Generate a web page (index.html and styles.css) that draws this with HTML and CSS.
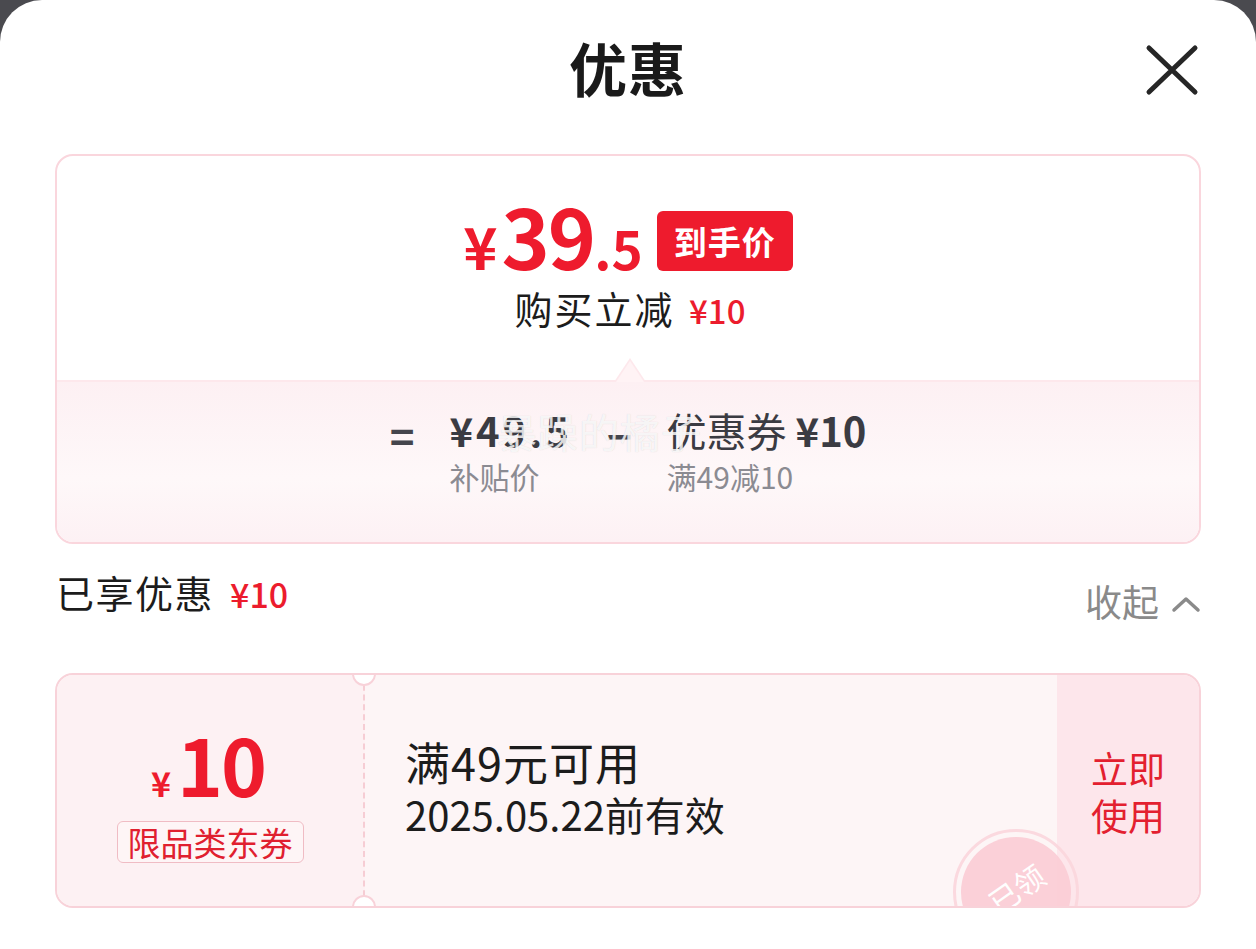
FILE: index.html
```html
<!DOCTYPE html>
<html lang="zh-CN">
 <head>
  <meta charset="UTF-8">
  <meta name="viewport" content="width=device-width, initial-scale=1.0">
  <title>优惠</title>
  <link rel="stylesheet" href="styles.css">
 </head>
<body>

<div class="sheet">

 <!-- Kopf -->
 <div class="kopf">
  <span></span>
  <h1 class="titel">优惠</h1>
  <span class="schliessen" title="关闭">
   <svg width="54" height="52" viewBox="0 0 54 52">
    <path d="M4 4 L50 48 M50 4 L4 48" stroke="#262626" stroke-width="5" stroke-linecap="round" fill="none"/>
   </svg>
  </span>
 </div>

 <!-- Preiskarte -->
 <div class="preiskarte">
  <div class="preis-oben">
   <div class="preiszeile">
    <span class="preis"><span class="yen">¥</span><span class="ganz">39</span><span class="rest">.5</span></span>
    <span class="marke">到手价</span>
   </div>
   <div class="ersparnis">购买立减 <span class="rot">¥10</span></div>
   <span class="pfeil"></span>
  </div>
  <div class="preis-unten">
   <span class="zeichen">=</span>
   <div class="posten posten-fett">
    <div class="posten-wert">¥49.5</div>
    <div class="posten-text">补贴价</div>
   </div>
   <span class="zeichen">−</span>
   <div class="posten">
    <div class="posten-wert">优惠券 <b>¥10</b></div>
    <div class="posten-text">满49减10</div>
   </div>
   <span class="wasserzeichen">暴躁的橘子</span>
  </div>
 </div>

 <!-- Zusammenfassung -->
 <div class="summe">
  <div class="summe-links">已享优惠 <span class="rot">¥10</span></div>
  <div class="summe-rechts">收起
   <svg width="30" height="18" viewBox="0 0 30 18">
    <path d="M3 15 L15 4 L27 15" stroke="#8a8a8a" stroke-width="3.5" stroke-linecap="round" stroke-linejoin="round" fill="none"/>
   </svg>
  </div>
 </div>

 <!-- Gutschein -->
 <div class="gutschein">
  <div class="gs-betrag">
   <div class="gs-preis"><span class="gs-yen">¥</span>10</div>
   <span class="gs-tag">限品类东券</span>
  </div>
  <div class="gs-info">
   <div class="gs-regel">满49元可用</div>
   <div class="gs-datum">2025.05.22前有效</div>
   <span class="stempel"><span class="stempel-text">已领</span></span>
  </div>
  <div class="gs-knopf">立即<br>使用</div>
 </div>

</div>

</body>
</html>
```

FILE: styles.css
```css
body {
 margin: 0;
 background: #4a4a4f;
 font-family: "Noto Sans CJK SC", "Noto Sans", sans-serif;
 color: #1c1c1c;
}

.sheet {
 background: #FFFFFF;
 border-radius: 42px 42px 0 0;
 min-height: 949px;
 padding: 0 55px;
 box-sizing: border-box;
 overflow: hidden;
}

.rot {
 color: #ec1c2d;
}

/* Kopf */
.kopf {
 display: grid;
 grid-template-columns: 1fr auto 1fr;
 align-items: center;
 height: 140px;
}

.titel {
 margin: 0;
 font-size: 58px;
 font-weight: 700;
 letter-spacing: 1px;
 color: #1a1a1a;
 margin-top: -6px;
}

.schliessen {
 justify-self: end;
 margin-right: 2px;
 display: flex;
}

/* Preiskarte */
.preiskarte {
 margin-top: 14px;
 border: Solid 2px #fad6dd;
 border-radius: 18px;
 overflow: hidden;
}

.preis-oben {
 position: relative;
 padding: 34px 0 45px;
 display: flex;
 flex-direction: column;
 align-items: center;
 border-bottom: Solid 2px #fde8ec;
}

.preiszeile {
 display: flex;
 align-items: center;
 height: 90px;
 margin-bottom: 3px;
 margin-left: 0;
}

.preis {
 color: #ee1b2d;
 font-weight: 700;
 line-height: 1;
 display: flex;
 align-items: baseline;
}

.preis .yen {
 font-size: 58px;
 margin-right: 4px;
}

.preis .ganz {
 font-size: 82px;
 letter-spacing: -2px;
}

.preis .rest {
 font-size: 53px;
}

.marke {
 margin-left: 14px;
 margin-top: 12px;
 background: #ee1b2d;
 color: #FFFFFF;
 font-size: 33px;
 font-weight: 700;
 height: 60px;
 line-height: 60px;
 padding: 0 17px;
 border-radius: 6px;
 letter-spacing: 1px;
}

.ersparnis {
 font-size: 38px;
 line-height: 50px;
 letter-spacing: 2px;
 margin-left: 4px;
}

.ersparnis .rot {
 font-size: 33px;
 font-weight: 500;
 letter-spacing: 0;
 margin-left: 4px;
}

.pfeil {
 position: absolute;
 left: 557px;
 bottom: -2px;
 width: 0;
 height: 0;
 border-left: 16px solid transparent;
 border-right: 16px solid transparent;
 border-bottom: 24px solid #fde8ec;
}

.pfeil::after {
 content: "";
 position: absolute;
 left: -14px;
 top: 3px;
 border-left: 14px solid transparent;
 border-right: 14px solid transparent;
 border-bottom: 21px solid #fff3f5;
}

.preis-unten {
 position: relative;
 display: flex;
 justify-content: center;
 align-items: flex-start;
 gap: 35px;
 padding: 23px 0 45px;
 background: linear-gradient(#fdf0f3, #fef8f9 60%, #fdf1f4);
}

.zeichen {
 font-size: 42px;
 font-weight: 700;
 line-height: 52px;
 color: #45454c;
 margin-top: 4px;
}

.posten-wert {
 font-size: 40px;
 font-weight: 400;
 line-height: 50px;
 color: #3b3b42;
}

.posten-wert b {
 font-weight: 700;
}

.posten-fett .posten-wert {
 font-weight: 700;
 letter-spacing: 3px;
}

.posten-text {
 font-size: 30px;
 line-height: 42px;
 color: #8b8b92;
}

.wasserzeichen {
 position: absolute;
 left: 440px;
 top: 20px;
 font-size: 40px;
 color: rgba(255, 255, 255, 0.8);
 text-shadow: 0 0 1px rgba(150, 150, 150, 0.35);
 letter-spacing: 1px;
}

/* Zusammenfassung */
.summe {
 display: flex;
 justify-content: space-between;
 align-items: flex-start;
 padding-top: 24px;
 margin-bottom: 48px;
}

.summe-links {
 font-size: 38px;
 line-height: 48px;
 letter-spacing: 1.5px;
 margin-left: 1px;
}

.summe-links .rot {
 font-size: 34px;
 font-weight: 500;
 letter-spacing: 0;
 margin-left: 6px;
}

.summe-rechts {
 display: flex;
 align-items: center;
 gap: 12px;
 margin-top: 9px;
 font-size: 37px;
 line-height: 48px;
 color: #8a8a8a;
}

.summe-rechts svg {
 margin-top: 6px;
}

/* Gutschein */
.gutschein {
 display: flex;
 height: 235px;
 box-sizing: border-box;
 border: Solid 2px #f8d2d9;
 border-radius: 18px;
 background: #fdf5f6;
 overflow: hidden;
 position: relative;
}

.gs-betrag {
 position: relative;
 width: 308px;
 flex: none;
 display: flex;
 flex-direction: column;
 align-items: center;
 justify-content: center;
 background: #fdf1f3;
 border-right: dashed 2px #f6cdd4;
 box-sizing: border-box;
}

.gs-betrag::before,
.gs-betrag::after {
 content: "";
 position: absolute;
 right: -13px;
 width: 20px;
 height: 20px;
 border-radius: 50%;
 background: #FFFFFF;
 border: Solid 2px #f8d2d9;
}

.gs-betrag::before {
 top: -13px;
}

.gs-betrag::after {
 bottom: -13px;
}

.gs-preis {
 color: #ee1b2d;
 font-weight: 700;
 font-size: 78px;
 line-height: 76px;
 letter-spacing: -2px;
 margin-right: 4px;
 margin-top: 6px;
}

.gs-yen {
 font-size: 34px;
 margin-right: 6px;
 letter-spacing: 0;
}

.gs-tag {
 margin-top: 0;
 border: Solid 1px #f0bcc4;
 border-radius: 6px;
 color: #e0202f;
 font-size: 33px;
 line-height: 40px;
 padding: 0 10px;
 background: #fef5f6;
}

.gs-info {
 position: relative;
 flex: 1;
 display: flex;
 flex-direction: column;
 justify-content: center;
 padding-left: 40px;
 padding-bottom: 6px;
}

.gs-regel {
 font-size: 45px;
 line-height: 52px;
 letter-spacing: 1px;
}

.gs-datum {
 font-size: 40px;
 line-height: 52px;
}

.stempel {
 position: absolute;
 left: 588px;
 top: 154px;
 width: 126px;
 height: 126px;
 border-radius: 50%;
 border: Solid 3px #fbd6dd;
 box-sizing: border-box;
 display: flex;
 align-items: center;
 justify-content: center;
 z-index: 2;
 opacity: 0.9;
}

.stempel::before {
 content: "";
 position: absolute;
 inset: 5px;
 border-radius: 50%;
 background: #fbccd5;
}

.stempel-text {
 position: relative;
 color: #FFFFFF;
 font-size: 30px;
 transform: rotate(-35deg);
 margin-top: -8px;
}

.gs-knopf {
 width: 142px;
 flex: none;
 background: #fde6eb;
 display: flex;
 align-items: center;
 justify-content: center;
 text-align: center;
 color: #e3202f;
 font-size: 37px;
 line-height: 47px;
 padding-top: 2px;
}
```
